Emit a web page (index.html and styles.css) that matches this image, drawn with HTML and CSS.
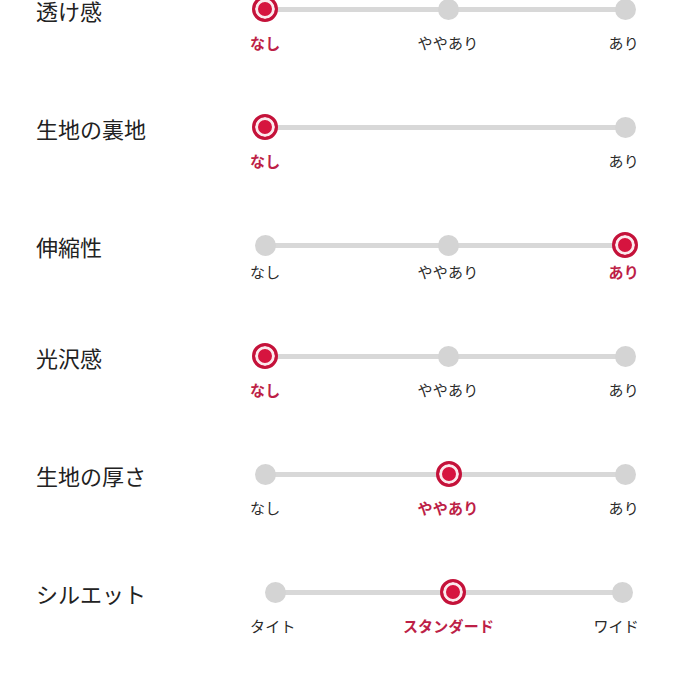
FILE: index.html
```html
<!DOCTYPE html>
<html lang="ja">
<head>
<meta charset="utf-8">
<link rel="stylesheet" href="styles.css">
</head>
<body>
<div class="specs">
  <div class="row">
    <div class="name">透け感</div>
    <div class="slider">
      <div class="dots"><span class="dot on"></span><span class="dot"></span><span class="dot"></span></div>
      <div class="labels"><span class="on">なし</span><span>ややあり</span><span>あり</span></div>
    </div>
  </div>
  <div class="row">
    <div class="name">生地の裏地</div>
    <div class="slider">
      <div class="dots"><span class="dot on"></span><span class="dot"></span></div>
      <div class="labels"><span class="on">なし</span><span>あり</span></div>
    </div>
  </div>
  <div class="row">
    <div class="name">伸縮性</div>
    <div class="slider tight">
      <div class="dots"><span class="dot"></span><span class="dot"></span><span class="dot on"></span></div>
      <div class="labels"><span>なし</span><span>ややあり</span><span class="on">あり</span></div>
    </div>
  </div>
  <div class="row">
    <div class="name">光沢感</div>
    <div class="slider">
      <div class="dots"><span class="dot on"></span><span class="dot"></span><span class="dot"></span></div>
      <div class="labels"><span class="on">なし</span><span>ややあり</span><span>あり</span></div>
    </div>
  </div>
  <div class="row">
    <div class="name">生地の厚さ</div>
    <div class="slider">
      <div class="dots"><span class="dot"></span><span class="dot on"></span><span class="dot"></span></div>
      <div class="labels"><span>なし</span><span class="on">ややあり</span><span>あり</span></div>
    </div>
  </div>
  <div class="row">
    <div class="name">シルエット</div>
    <div class="slider fit">
      <div class="dots"><span class="dot"></span><span class="dot on"></span><span class="dot"></span></div>
      <div class="labels"><span>タイト</span><span class="on">スタンダード</span><span>ワイド</span></div>
    </div>
  </div>
</div>
</body>
</html>
```

FILE: styles.css
```css
html, body {
  margin: 0;
  padding: 0;
  background: #ffffff;
}
body {
  font-family: "Noto Sans CJK JP", "Noto Sans", sans-serif;
  color: #222222;
}
.specs {
  margin-top: -4px;
  padding-left: 36px;
  display: flex;
  flex-direction: column;
  gap: 61px;
}
.row {
  display: flex;
  align-items: flex-start;
}
.name {
  width: 214px;
  flex: none;
  font-size: 22px;
  line-height: 26px;
  margin-top: 1px;
  color: #222222;
}
.slider {
  width: 389px;
  --pl: 2px;
  --pr: 1px;
  --mid: 7px;
}
.slider.fit {
  --pl: 12px;
  --pr: 4px;
  --mid: 8px;
}
.dots {
  position: relative;
  display: flex;
  justify-content: space-between;
  align-items: center;
  height: 26px;
  padding: 0 var(--pr) 0 var(--pl);
}
.dots::before {
  content: "";
  position: absolute;
  left: calc(var(--pl) + 13px);
  right: calc(var(--pr) + 13px);
  top: 11px;
  height: 5px;
  background: #d8d8d8;
}
.dot {
  position: relative;
  width: 26px;
  height: 26px;
  display: flex;
  align-items: center;
  justify-content: center;
}
.dot:nth-child(2):not(:last-child),
.labels span:nth-child(2):not(:last-child) {
  margin-left: var(--mid);
}
.dot::after {
  content: "";
  width: 21px;
  height: 21px;
  border-radius: 50%;
  background: #d4d4d4;
}
.dot.on::after {
  width: 26px;
  height: 26px;
  box-sizing: border-box;
  border: 3px solid #c4123a;
  background: #d6143f;
  box-shadow: inset 0 0 0 3px #fbe9ed;
}
.labels {
  display: flex;
  justify-content: space-between;
  margin-top: 11px;
  font-size: 15px;
  line-height: 20px;
  letter-spacing: 0.2px;
  color: #2a2a2a;
}
.slider.tight .labels {
  margin-top: 4px;
}
.labels .on {
  color: #bd1f47;
  font-weight: 700;
}
```
